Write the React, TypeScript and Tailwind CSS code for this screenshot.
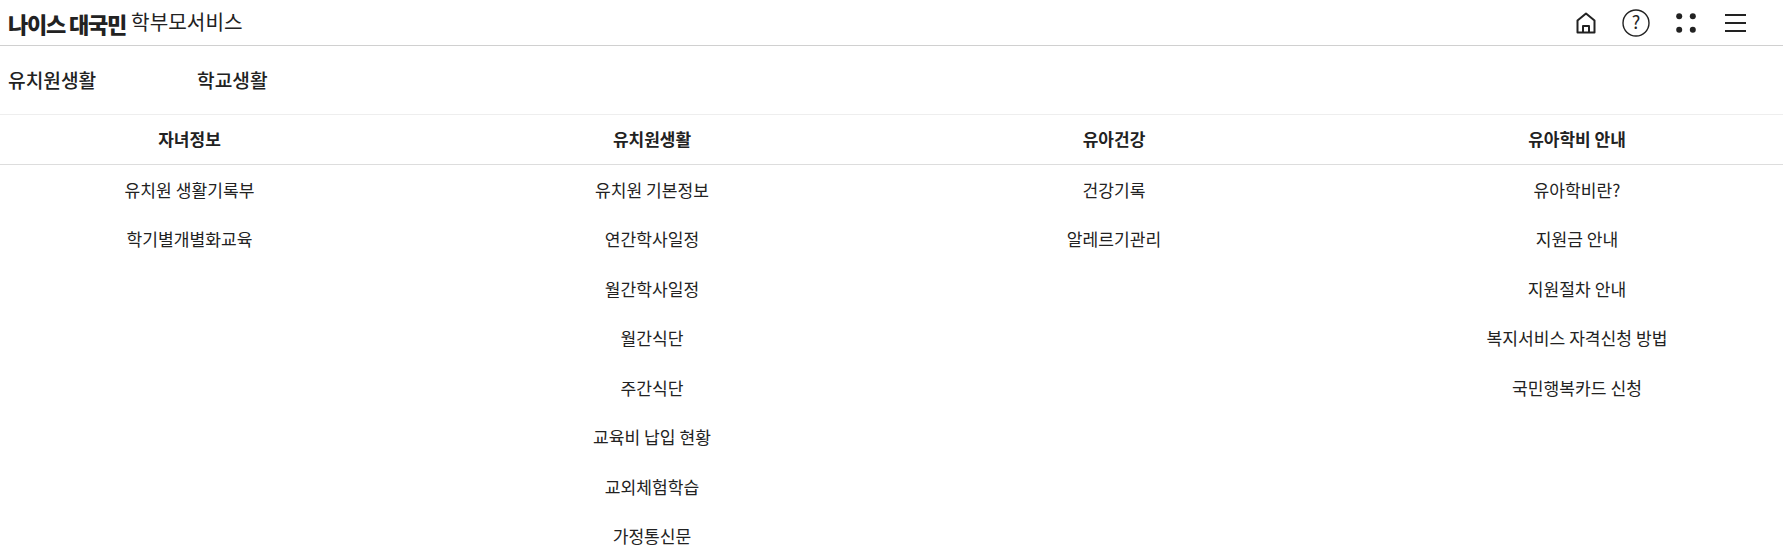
import React from 'react';

const columns = [
  { title: '자녀정보', width: 'w-[379px]', items: ['유치원 생활기록부', '학기별개별화교육'] },
  {
    title: '유치원생활',
    width: 'w-[412px] ml-[67px]',
    items: ['유치원 기본정보', '연간학사일정', '월간학사일정', '월간식단', '주간식단', '교육비 납입 현황', '교외체험학습', '가정통신문'],
  },
  { title: '유아건강', width: 'w-[412px] ml-[50px]', items: ['건강기록', '알레르기관리'] },
  {
    title: '유아학비 안내',
    width: 'w-[412px] ml-[51px]',
    items: ['유아학비란?', '지원금 안내', '지원절차 안내', '복지서비스 자격신청 방법', '국민행복카드 신청'],
  },
];

export default function App() {
  return (
    <div className="h-[558px] w-full overflow-hidden bg-white text-[#222] font-['Noto_Sans_CJK_KR','Noto_Sans',sans-serif]">
      <header className="flex h-[46px] items-center justify-between border-b border-[#d0d0d0] pl-2">
        <div className="flex items-center gap-[5px]">
          <span className="text-[22px] font-black tracking-[-1.2px] leading-none">나이스 대국민</span>
          <span className="text-[20.2px] leading-none">학부모서비스</span>
        </div>
        <div className="flex items-center pr-[37px]">
          <svg width="20" height="22" viewBox="0 0 20 22" fill="none" stroke="#222" strokeWidth="2" strokeLinejoin="round">
            <path d="M1.5 20.5V8.5L10 1.5l8.5 7v12Z" />
            <path d="M7 20.500v-6.500h6v6.500" />
          </svg>
          <svg className="ml-[26px]" width="28" height="28" viewBox="0 0 28 28" fill="none" stroke="#222" strokeWidth="1.4">
            <circle cx="14" cy="14" r="13" />
            <text x="14" y="20" textAnchor="middle" fontSize="18" fill="#222" stroke="none">?</text>
          </svg>
          <svg className="ml-[26px]" width="20" height="20" viewBox="0 0 20 20" fill="#222">
            <circle cx="3.200" cy="3.200" r="3" />
            <circle cx="16.800" cy="3.200" r="3" />
            <circle cx="3.200" cy="16.800" r="3" />
            <circle cx="16.800" cy="16.800" r="3" />
          </svg>
          <div className="ml-[29px] flex w-[21px] flex-col gap-[6px]">
            <div className="h-[2px] bg-[#222]" />
            <div className="h-[2px] bg-[#222]" />
            <div className="h-[2px] bg-[#222]" />
          </div>
        </div>
      </header>
      <nav className="flex h-[69px] items-center border-b border-[#eee] pl-2 text-[19.2px] font-medium">
        <span className="w-[189px]">유치원생활</span>
        <span>학교생활</span>
      </nav>
      <div className="flex h-[50px] items-center border-b border-[#ddd] pb-[2px] text-[17px] font-bold">
        {columns.map((c) => (
          <div key={c.title} className={`${c.width} text-center`}>{c.title}</div>
        ))}
      </div>
      <div className="flex text-[17.12px]">
        {columns.map((c) => (
          <ul key={c.title} className={`${c.width} text-center`}>
            {c.items.map((item) => (
              <li key={item} className="flex h-[49.5px] items-center justify-center">{item}</li>
            ))}
          </ul>
        ))}
      </div>
    </div>
  );
}
